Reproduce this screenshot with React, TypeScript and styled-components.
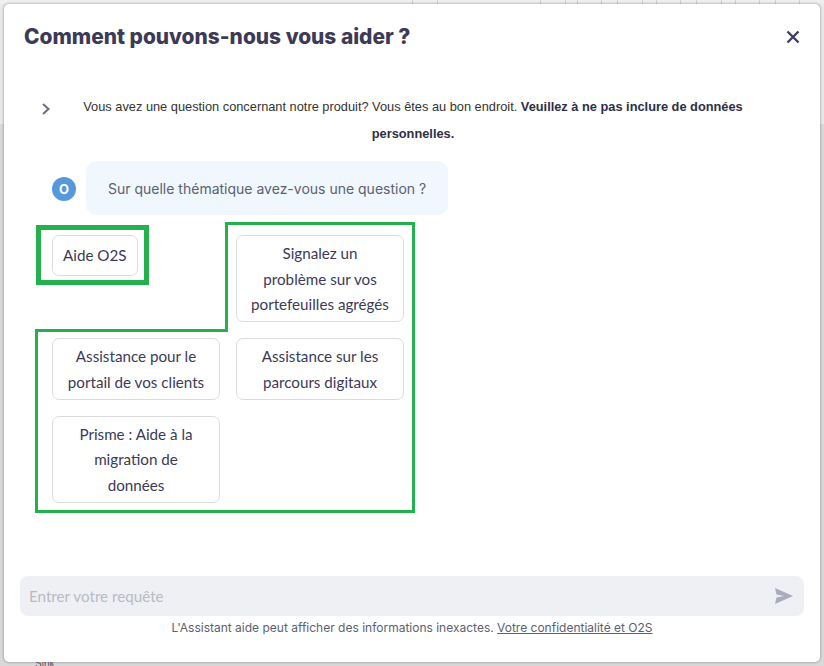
import React from "react";
import styled, { createGlobalStyle } from "styled-components";

const Global = createGlobalStyle`
  html, body { margin: 0; padding: 0; }
  body { width: 824px; height: 666px; overflow: hidden; background: #e9e9e9; font-family: "Inter", sans-serif; }
`;

const Page = styled.div`
  width: 824px;
  height: 666px;
  box-sizing: border-box;
  display: flex;
  flex-direction: column;
  background: linear-gradient(#e9e9e9 0 124px, #d9d9da 124px);
`;

const TopStrip = styled.div`
  height: 4px;
  flex: none;
  display: flex;
  padding-left: 412px;
  overflow: hidden;
  background: #efefef;
`;

const Cell = styled.span<{ $w: number }>`
  flex: none;
  width: ${(p) => p.$w}px;
  box-sizing: border-box;
  border-left: 1px solid #cfcfcf;
`;

const BottomStrip = styled.div`
  height: 4px;
  flex: none;
  overflow: hidden;
  padding-left: 35px;
  font-family: "Liberation Sans", Arial, sans-serif;
  font-size: 10px;
  line-height: 4px;
  color: #55555f;
`;

const Modal = styled.div`
  height: 658px;
  margin: 0 4px;
  box-sizing: border-box;
  background: #fff;
  border-radius: 5px;
  box-shadow: 0 0 3px rgba(0, 0, 0, 0.4);
  display: flex;
  flex-direction: column;
  padding: 0 16px;
  flex: none;
`;

const Header = styled.header`
  display: flex;
  align-items: center;
  justify-content: space-between;
  height: 65px;
  padding: 0 3px 0 4px;
  flex: none;
`;

const Title = styled.h1`
  margin: 0;
  font-family: "Inter", sans-serif;
  font-weight: 800;
  font-size: 20.9px;
  color: #3c3a56;
`;

const Close = styled.button`
  border: 0;
  background: none;
  padding: 0;
  width: 16px;
  height: 16px;
  color: #3c3f62;
  display: flex;
`;

const Intro = styled.div`
  display: flex;
  align-items: flex-start;
  margin-top: 24px;
`;

const Chevron = styled.span`
  width: 53px;
  flex: none;
  padding-left: 21px;
  padding-top: 9px;
  box-sizing: border-box;
  color: #6d6e7e;
  display: flex;
`;

const IntroText = styled.p`
  margin: 0;
  width: 680px;
  text-align: center;
  font-family: "Liberation Sans", Arial, sans-serif;
  font-size: 12.8px;
  line-height: 27px;
  color: #333;
  b { color: #2f2e45; }
`;

const Question = styled.div`
  display: flex;
  align-items: center;
  gap: 10px;
  margin: 14px 0 0 32px;
`;

const Avatar = styled.div`
  width: 24px;
  height: 24px;
  margin-top: 2px;
  border-radius: 50%;
  background: #5598db;
  color: #fff;
  font-weight: 700;
  font-size: 13px;
  display: flex;
  align-items: center;
  justify-content: center;
`;

const Bubble = styled.div`
  width: 362px;
  height: 54px;
  box-sizing: border-box;
  padding: 1px 22px 0;
  display: flex;
  align-items: center;
  background: #f0f7fe;
  border-radius: 10px;
  color: #5b6170;
  font-size: 14px;
  white-space: nowrap;
`;

const Options = styled.div`
  position: relative;
  display: grid;
  grid-template-columns: 168px 168px;
  column-gap: 16px;
  row-gap: 16px;
  align-items: start;
  margin: 20px 0 0 32px;
  width: 352px;
`;

const Option = styled.button<{ $fit?: boolean }>`
  box-sizing: border-box;
  justify-self: ${(p) => (p.$fit ? "start" : "stretch")};
  padding: ${(p) => (p.$fit ? "6.5px 10px" : "5px 13px 3.5px")};
  background: #fff;
  border: 1px solid #dcdcde;
  border-radius: 7px;
  font-family: "Lato", "Noto Sans", sans-serif;
  font-size: 15.2px;
  line-height: 25.5px;
  color: #3c3a56;
  text-align: center;
`;

const HighlightSmall = styled.div`
  position: absolute;
  left: -16px;
  top: -10px;
  width: 113px;
  height: 60px;
  box-sizing: border-box;
  border: 5px solid #22b14c;
`;

const HighlightLarge = styled.svg`
  position: absolute;
  left: -17px;
  top: -13px;
  overflow: visible;
`;

const Spacer = styled.div`
  flex: 1;
`;

const InputBar = styled.div`
  height: 40px;
  background: #eff0f4;
  border-radius: 8px;
  display: flex;
  align-items: center;
  justify-content: space-between;
  padding: 0 11px 0 9px;
  flex: none;
`;

const Placeholder = styled.span`
  font-family: "Lato", "Noto Sans", sans-serif;
  font-size: 15.2px;
  color: #b9bac2;
`;

const Note = styled.p`
  margin: 0;
  height: 46px;
  padding-top: 4px;
  box-sizing: border-box;
  text-align: center;
  font-size: 12px;
  line-height: 16px;
  color: #5b6170;
  flex: none;
  a { color: inherit; text-decoration: underline; }
`;

const cells = [25, 103, 25, 12, 24, 16, 25, 14, 24, 16, 25, 14, 24, 16, 24, 25];

export default function App() {
  return (
    <>
      <Global />
      <Page>
        <TopStrip>
          {cells.map((w, i) => (
            <Cell key={i} $w={w} />
          ))}
        </TopStrip>
        <Modal>
          <Header>
            <Title>Comment pouvons-nous vous aider ?</Title>
            <Close aria-label="Fermer">
              <svg width="16" height="16" viewBox="0 0 16 16" fill="none" stroke="currentColor" strokeWidth="2.4">
                <path d="M2.5 2.5 13.5 13.5M13.5 2.5 2.5 13.5" />
              </svg>
            </Close>
          </Header>
          <Intro>
            <Chevron>
              <svg width="10" height="14" viewBox="0 0 10 14" fill="none" stroke="currentColor" strokeWidth="2">
                <path d="M2 2l5.5 5L2 12" />
              </svg>
            </Chevron>
            <IntroText>
              Vous avez une question concernant notre produit? Vous êtes au bon endroit. <b>Veuillez à ne pas inclure de données personnelles.</b>
            </IntroText>
          </Intro>
          <Question>
            <Avatar>O</Avatar>
            <Bubble>Sur quelle thématique avez-vous une question ?</Bubble>
          </Question>
          <Options>
            <HighlightSmall />
            <HighlightLarge width="380" height="291" viewBox="0 0 380 291" fill="none" stroke="#22b14c" strokeWidth="3">
              <path d="M191.5 1.5H378.5V289.5H1.5V108.5H191.5Z" />
            </HighlightLarge>
            <Option $fit>Aide O2S</Option>
            <Option>Signalez un problème sur vos portefeuilles agrégés</Option>
            <Option>Assistance pour le portail de vos clients</Option>
            <Option>Assistance sur les parcours digitaux</Option>
            <Option>Prisme : Aide à la migration de données</Option>
          </Options>
          <Spacer />
          <InputBar>
            <Placeholder>Entrer votre requête</Placeholder>
            <svg width="18" height="16" viewBox="0 0 18 16" fill="#a9abbe">
              <path d="M0 0 18 8 0 16 1.5 9.5 9 8 1.5 6.5Z" />
            </svg>
          </InputBar>
          <Note>
            L'Assistant aide peut afficher des informations inexactes. <a href="#">Votre confidentialité et O2S</a>
          </Note>
        </Modal>
        <BottomStrip>Sink</BottomStrip>
      </Page>
    </>
  );
}
